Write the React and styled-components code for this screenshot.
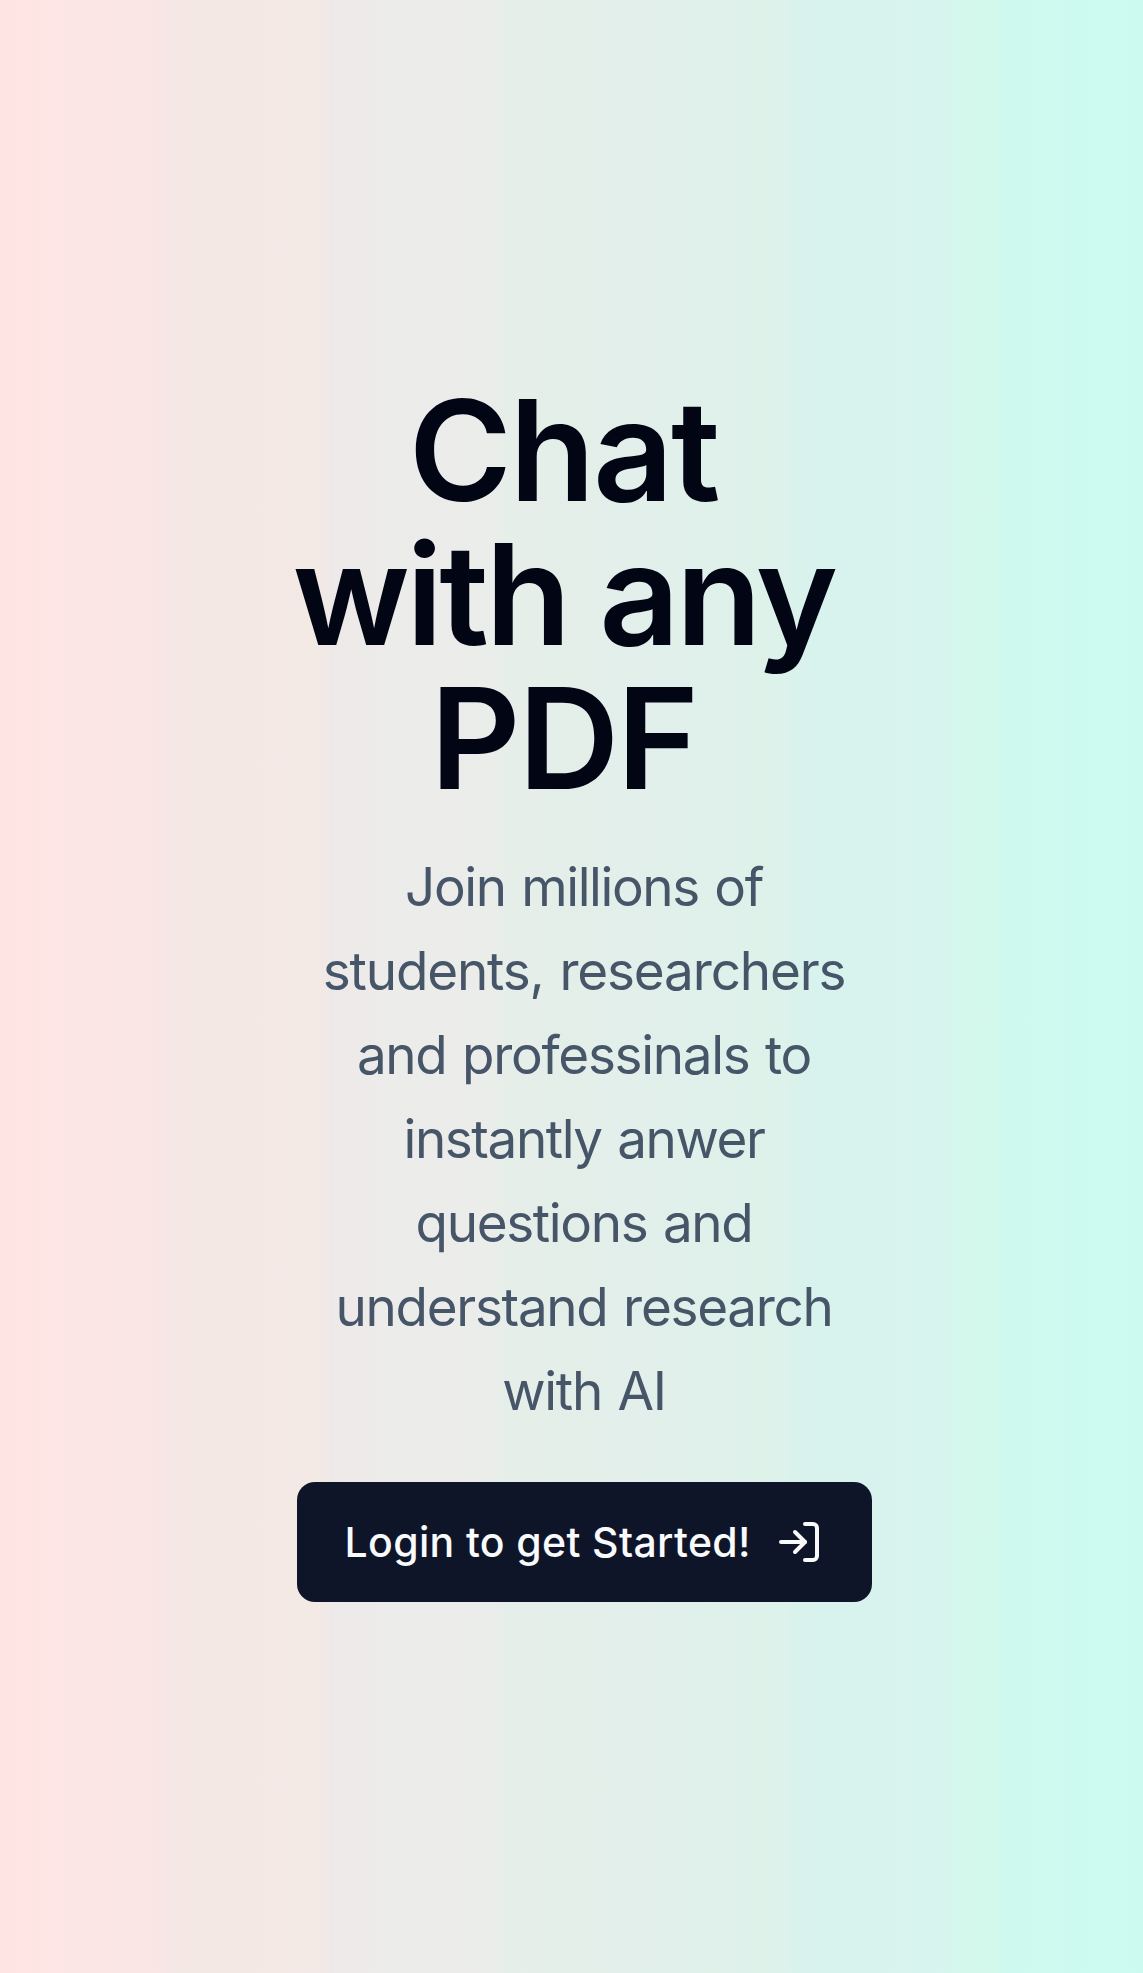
import React from "react";
import styled, { createGlobalStyle } from "styled-components";

const Global = createGlobalStyle`
  body { margin: 0; font-family: Inter, "Liberation Sans", sans-serif; }
  *, *::before, *::after { box-sizing: border-box; }
`;
const Page = styled.main`
  width: 100%;
  min-height: 1973px;
  padding-top: 378px;
  background: linear-gradient(
    90deg,
    #ffe3e3 0%,
    #fee5e4 3%,
    #fbe6e5 7%,
    #f8e6e5 14%,
    #f4e7e4 15%,
    #f3e9e5 28%,
    #eee9e9 29%,
    #ececea 34%,
    #ebedea 43%,
    #e6eee9 44%,
    #e2efea 56%,
    #ddf2ea 68%,
    #d8f2ed 71%,
    #d8f4ee 82%,
    #d4f7eb 84%,
    #d2f9ec 87%,
    #cef9ef 88%,
    #ccfaf1 100%
  );
`;
const Hero = styled.section`
  width: 575px;
  margin-left: 296.5px;
  display: flex;
  flex-direction: column;
  align-items: center;
`;
const Title = styled.h1`
  margin: 0 0 0 -7px;
  width: 548px;
  align-self: flex-start;
  text-align: center;
  font-size: 140px;
  line-height: 144px;
  font-weight: 600;
  color: #010514;
`;
const Line = styled.span`
  display: block;
  white-space: nowrap;
  letter-spacing: ${(p) => p.$track}px;
`;
const Lead = styled.p`
  margin: 35px 0 0;
  text-align: center;
  font-size: 53px;
  line-height: 84px;
  word-spacing: 2px;
  color: #475569;
`;
const LoginButton = styled.button`
  margin-top: 49px;
  width: 575px;
  height: 120px;
  border: 0;
  border-radius: 18px;
  display: flex;
  align-items: center;
  padding: 0 48px;
  gap: 24px;
  background: #0f1529;
  color: #f8fafc;
  font: 500 41px Inter, sans-serif;
  letter-spacing: 0.36px;
  white-space: nowrap;
`;
const titleLines = [
  ["Chat", -2.3],
  ["with any", -3.6],
  ["PDF", -2.4],
];
const leadLines = [
  ["Join millions of", -1.4],
  ["students, researchers", -1.16],
  ["and professinals to", -1.3],
  ["instantly anwer", -1.42],
  ["questions and", -1.35],
  ["understand research", -1.3],
  ["with AI", -1.3],
];

export default function App() {
  return (
    <Page>
      <Global />
      <Hero>
        <Title>
          {titleLines.map(([text, track]) => <Line key={text} $track={track}>{text}</Line>)}
        </Title>
        <Lead>
          {leadLines.map(([text, track]) => <Line key={text} $track={track}>{text}</Line>)}
        </Lead>
        <LoginButton>
          Login to get Started!
          <svg width="48" height="48" viewBox="0 0 24 24" fill="none" stroke="currentColor" strokeWidth="2" strokeLinecap="round" strokeLinejoin="round">
            <path d="M15 3h4a2 2 0 0 1 2 2v14a2 2 0 0 1-2 2h-4" />
            <polyline points="10 17 15 12 10 7" />
            <line x1="15" x2="3" y1="12" y2="12" />
          </svg>
        </LoginButton>
      </Hero>
    </Page>
  );
}
